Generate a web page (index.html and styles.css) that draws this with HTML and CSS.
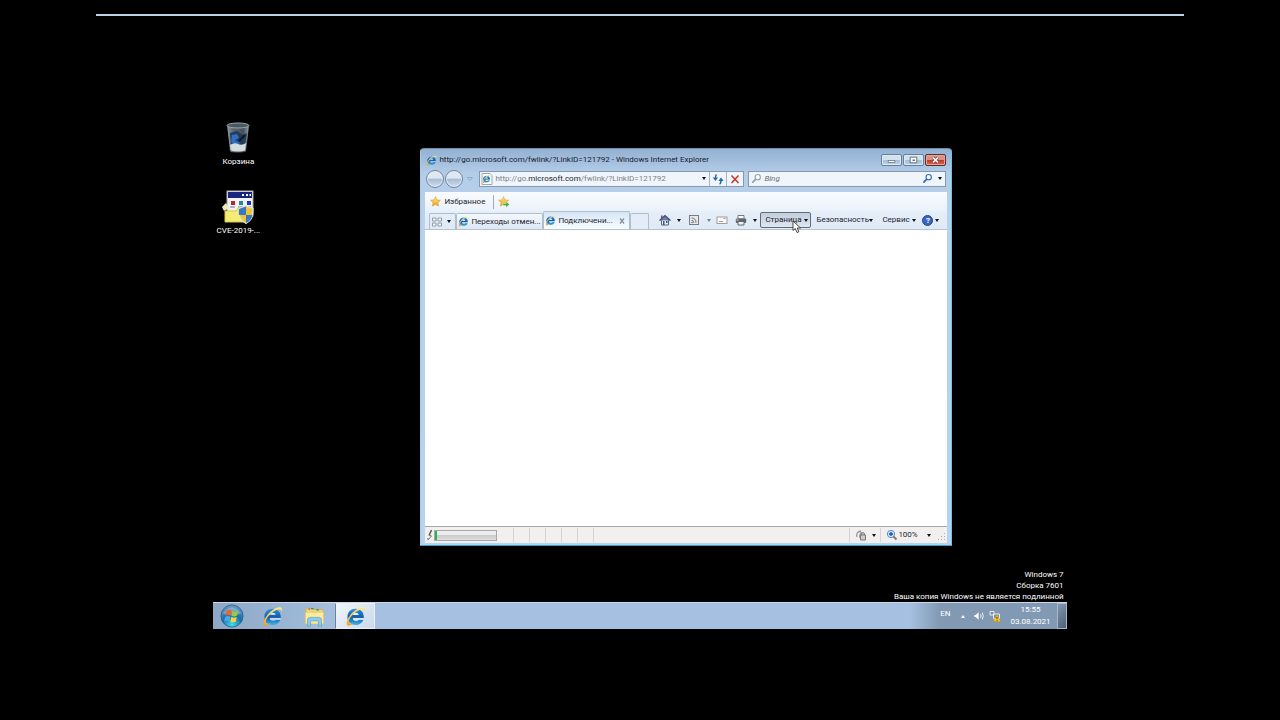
FILE: index.html
```html
<!DOCTYPE html>
<html lang="ru">
<head>
<meta charset="utf-8">
<title>Windows 7</title>
<link rel="stylesheet" href="styles.css">
</head>
<body>
<svg class="defs" width="0" height="0" aria-hidden="true">
  <defs>
    <linearGradient id="ieBlue" x1="0" y1="0" x2="0" y2="1">
      <stop offset="0" stop-color="#2f93dd"/><stop offset=".5" stop-color="#145cae"/><stop offset="1" stop-color="#38b2e6"/>
    </linearGradient>
    <linearGradient id="gold" x1="0" y1="0" x2="0" y2="1">
      <stop offset="0" stop-color="#ffe98c"/><stop offset="1" stop-color="#f0a21c"/>
    </linearGradient>
    <radialGradient id="orb" cx=".5" cy=".9" r=".9">
      <stop offset="0" stop-color="#3fe0f4"/><stop offset=".5" stop-color="#1a6ea8"/><stop offset="1" stop-color="#6f9cc4"/>
    </radialGradient>
    <linearGradient id="bin" x1="0" y1="0" x2="1" y2="0">
      <stop offset="0" stop-color="#8b9aa3"/><stop offset=".3" stop-color="#56646e"/><stop offset=".75" stop-color="#46535d"/><stop offset="1" stop-color="#94a2aa"/>
    </linearGradient>
    <symbol id="ie" viewBox="0 0 24 24">
      <path d="M21.500 14H9c.2 2 1.500 3 3.600 3 1.400 0 2.500-.500 3.100-1.400h5.300c-1.200 3.700-4.400 6-8.700 6-5.700 0-9.500-3.600-9.500-9.100S6.600 3.200 12.300 3.200c5.800 0 9.500 4 9.200 10.800zM9.100 10.400h6.500c-.2-1.700-1.400-2.600-3.100-2.600s-3 .9-3.400 2.600z" fill="url(#ieBlue)"/>
      <path d="M9.500 9.800h5.800c-.4-1.200-1.400-1.700-2.800-1.700s-2.600.6-3 1.700zM9 14h12.400v1.400H9.500z" fill="#e4f2fb"/>
      <path d="M3.300 22.500C-.3 20.800 3.500 11.500 10 6.200 15.500 1.700 21.600-.1 22.700 3c.4 1.100.1 2.500-.6 3.900.1-2-.8-3.100-2.900-2.900C15.800 4.300 11 7.200 7.500 11.500c-3.400 4.200-4.500 8.100-1.500 8.700 1 .2 2.300-.1 3.700-.7-2.500 2.300-4.900 3.600-6.400 3z" fill="url(#gold)"/>
    </symbol>
    <symbol id="star" viewBox="0 0 24 24">
      <path d="M12 1.500l3.200 7 7.500.8-5.600 5.200 1.600 7.500L12 18.200 5.300 22l1.600-7.500L1.300 9.300l7.500-.8z" fill="url(#gold)" stroke="#d99314" stroke-width="1.200"/>
    </symbol>
    <symbol id="glass" viewBox="0 0 12 12">
      <circle cx="7.300" cy="4.500" r="2.900" fill="#fff" fill-opacity=".7" stroke="currentColor" stroke-width="1.200"/>
      <path d="M5 7L2 10" stroke="currentColor" stroke-width="1.800" stroke-linecap="round"/>
    </symbol>
  </defs>
</svg>

<div class="session-line"></div>
<main class="desktop">
  <div class="shortcuts">
    <a class="shortcut" href="#">
      <svg viewBox="0 0 34 34">
        <path d="M6 4h22l-3 26c-.3 2-15.700 2-16 0z" fill="url(#bin)"/>
        <path d="M9 12l7-2 6 4 4-2-2 12H10z" fill="#243c58"/>
        <path d="M11 14l5-1 2 4-4 2 5 3-3 3-6-4z" fill="#2f6fca"/>
        <path d="M18 20l6-6" stroke="#0c1826" stroke-width="2"/>
        <path d="M9 24q4-3 8-1t8-1l-.8 7c-2 2-12 2-14.400 0z" fill="#d5dde0"/>
        <ellipse cx="17" cy="4.500" rx="11" ry="2.500" fill="#4a5860" stroke="#9aa6ab"/>
      </svg>
      <span>Корзина</span>
    </a>
    <a class="shortcut" href="#">
      <svg viewBox="0 0 34 34">
        <rect x="6" y="1" width="26" height="25" fill="#f2f2f4" stroke="#aaa"/>
        <rect x="7" y="2" width="24" height="6" fill="#19247e"/>
        <path d="M21 4h2v2h-2zM25 4h2v2h-2zM28.500 4h1.500v2h-1.500z" fill="#fff"/>
        <path d="M10 11h4v4h-4z" fill="#b32636"/><path d="M18 11h4v4h-4z" fill="#1c8d9b"/><path d="M26 11h4v4h-4z" fill="#2336ad"/>
        <path d="M9 17h5M17 17h5M25 17h5" stroke="#777"/>
        <path d="M4 21h11l2-3h6v14H4z" fill="#f4ed72" stroke="#d4c746"/>
        <path d="M1 17l4-4 3 5-5 3z" fill="#ecebb5"/>
        <path d="M25 16l7 2.500c0 8-1 12-7 15-6-3-7-7-7-15z" fill="#efc735" stroke="#dde5ec" stroke-width="1.200"/>
        <path d="M25 16.500V25h-7q-.3-3 0-6zM25 25h6.500q-1.500 6-6.500 8z" fill="#3b78c4"/>
      </svg>
      <span>CVE-2019-...</span>
    </a>
  </div>

  <section class="window">
    <header class="titlebar">
      <svg class="i11"><use href="#ie"/></svg>
      <h1>http://go.microsoft.com/fwlink/?LinkID=121792 - Windows Internet Explorer</h1>
      <button class="caption" aria-label="Свернуть"><svg viewBox="0 0 20 10"><rect x="6.500" y="5.500" width="7" height="2" fill="#fff" stroke="#667585" stroke-width=".8"/></svg></button>
      <button class="caption" aria-label="Развернуть"><svg viewBox="0 0 20 10"><path d="M6.500 2h7v6h-7z" fill="#fff" stroke="#5b6877"/><path d="M9 4.500h2.500v1.500H9z" fill="#53606e"/></svg></button>
      <button class="caption close" aria-label="Закрыть"><svg viewBox="0 0 20 10"><path d="M7.500 2.500l5 5m0-5l-5 5" stroke="#69302c" stroke-width="3"/><path d="M7.500 2.500l5 5m0-5l-5 5" stroke="#fff" stroke-width="1.700"/></svg></button>
    </header>

    <div class="address-row">
      <button class="nav" aria-label="Назад"></button>
      <button class="nav" aria-label="Вперед"></button>
      <svg class="recent" viewBox="0 0 8 6"><path d="M1.500 1.500h5L4 4.500z" fill="#c9dcee" stroke="#7fa6cd" stroke-width=".9"/></svg>
      <div class="address">
        <svg class="page-icon" viewBox="0 0 12 12"><path d="M1 .5h8l2 2v9H1z" fill="#fff" stroke="#9fa6ac"/><use href="#ie" x="1" y="1.500" width="9" height="9"/></svg>
        <div class="url" role="textbox" aria-label="Адрес" tabindex="0">http://go.<b>microsoft.com</b>/fwlink/?LinkID=121792</div>
        <button class="drop" aria-label="Показать адреса"></button>
        <button class="cell" aria-label="Обновить"><svg viewBox="0 0 12 12"><path d="M4.500 1.500Q3.500 2 3.500 5" fill="none" stroke="#2368ad" stroke-width="1.500"/><path d="M.8 4.500H6L3.400 8z" fill="#2368ad"/><path d="M7.500 11Q9 10.500 9 7.500" fill="none" stroke="#2368ad" stroke-width="1.500"/><path d="M6.400 8h5.200L9 4.500z" fill="#2368ad"/></svg></button>
        <button class="cell" aria-label="Остановить"><svg viewBox="0 0 12 12"><path d="M2.500 2.500l7 7.500M9.500 2.500l-7 7.500" stroke="#c73524" stroke-width="1.500"/></svg></button>
      </div>
      <div class="search">
        <svg class="i11 pale"><use href="#glass"/></svg>
        <input type="text" placeholder="Bing" aria-label="Поиск">
        <button class="go" aria-label="Найти"><svg class="i11"><use href="#glass"/></svg></button>
        <button class="drop" aria-label="Параметры поиска"></button>
      </div>
    </div>

    <div class="favorites">
      <button class="fav"><svg class="i11"><use href="#star"/></svg>Избранное</button>
      <button class="fav add" aria-label="Добавить"><svg class="i12" viewBox="0 0 12 12"><use href="#star" width="11" height="11"/><path d="M5 7.500h3v-2L11.500 8.500 8 11.500v-2H5z" fill="#3fae3c" stroke="#e7f5dc" stroke-width=".5"/></svg></button>
    </div>

    <div class="toolbar">
      <div class="tabs">
        <button class="quick" aria-label="Быстрые вкладки"><svg viewBox="0 0 12 12"><path d="M1.500 2h3.500v3H1.500zM7 2h3.500v3H7zM1.500 7h3.500v3H1.500zM7 7h3.500v3H7z" fill="#fff" stroke="#8d9aa8"/></svg><i class="arrow"></i></button>
        <button class="tab"><svg class="i11"><use href="#ie"/></svg><span>Переходы отмен...</span></button>
        <button class="tab active"><svg class="i11"><use href="#ie"/></svg><span>Подключени...</span><svg class="x" viewBox="0 0 8 8"><path d="M2 1.500l4 5M6 1.500l-4 5" stroke="#8793a1" stroke-width="1.300"/></svg></button>
        <button class="newtab" aria-label="Новая вкладка"></button>
      </div>
      <div class="commands">
        <button class="cmd home" aria-label="Домой"><svg viewBox="0 0 12 12"><path d="M2.500 5.500h7v5.500h-7z" fill="#e8eef5" stroke="#55657c"/><path d="M.5 6.500L6 1.500l5.500 5" fill="#6b7fa8" stroke="#3d4f78" stroke-width="1.200"/><path d="M2 1.500h1.500V4H2z" fill="#8b4b42"/><path d="M4 7h1.500v4H4zM7 7h1.500v2H7z" fill="#3d567e"/></svg><i class="arrow"></i></button>
        <button class="cmd rss" aria-label="Веб-каналы"><svg viewBox="0 0 12 12"><rect x="1.500" y="1.500" width="9" height="9" fill="#e6e8ea" stroke="#777d83"/><path d="M3.500 4q4.500 0 4.500 4.800M3.500 6.300q2.300 0 2.300 2.500" fill="none" stroke="#70767c"/><circle cx="4" cy="8.500" r=".8" fill="#70767c"/></svg><i class="arrow dim"></i></button>
        <button class="cmd mail" aria-label="Почта"><svg viewBox="0 0 12 12"><rect x="1" y="3" width="10" height="6.500" fill="#fcfcfc" stroke="#999fa6"/><path d="M7.500 4.500h2M3 7.500h4" stroke="#bd8f82"/></svg></button>
        <button class="cmd print" aria-label="Печать"><svg viewBox="0 0 12 12"><path d="M3 1.500h6V5H3z" fill="#fff" stroke="#777"/><rect x=".8" y="4.500" width="10.400" height="4.500" rx="1" fill="#60666e"/><path d="M3 7.500h6V11H3z" fill="#eef0f3" stroke="#666"/><path d="M1.500 6h2" stroke="#cdd"/></svg><i class="arrow"></i></button>
        <button class="cmd pressed">Страница<i class="arrow"></i></button>
        <button class="cmd safety">Безопасность<i class="arrow"></i></button>
        <button class="cmd service">Сервис<i class="arrow"></i></button>
        <button class="cmd help" aria-label="Справка"><span class="ball">?</span><i class="arrow"></i></button>
      </div>
    </div>

    <div class="page"></div>

    <footer class="status">
      <svg class="pen" viewBox="0 0 8 12"><path d="M5.500 1L3 6.500" stroke="#555" stroke-width="1.500"/><path d="M3 6l2.500 1L2 11M1 10h2" stroke="#777" fill="none"/></svg>
      <div class="meter" role="progressbar" aria-label="Загрузка"></div>
      <div class="cells"><i></i><i></i><i></i><i></i><i></i><i></i></div>
      <button class="zone" aria-label="Фильтрация"><svg viewBox="0 0 12 12"><path d="M2 8q-1.500-5 4-6M5 9q-1-4 2-6" fill="none" stroke="#999" stroke-width="1.300"/><path d="M6.500 6V4.500q1.500-2 3 0V6M5.500 6h5v5h-5z" fill="#ccc" stroke="#777"/></svg><i class="arrow"></i></button>
      <button class="zoom"><svg viewBox="0 0 12 12"><path d="M7 7l3.500 3.500" stroke="#8b7562" stroke-width="2"/><circle cx="5" cy="5" r="3.600" fill="#d6eaff" stroke="#5687bd"/><path d="M5 3v4M3 5h4" stroke="#154fae" stroke-width="1.400"/></svg>100%<i class="arrow"></i></button>
      <svg class="grip" viewBox="0 0 8 10"><path d="M6 3h1v1H6zM6 6h1v1H6zM3 6h1v1H3zM6 9h1v1H6zM3 9h1v1H3zM0 9h1v1H0z" fill="#aeb3b8"/></svg>
    </footer>
  </section>

  <svg class="cursor" viewBox="0 0 10 14"><path d="M1 1v9.500l2.300-2L5 12.500l1.900-.8L5.200 8H8.500z" fill="#fff" stroke="#333" stroke-width=".9"/></svg>

  <div class="bottom">
    <div class="watermark">
      <p>Windows 7</p>
      <p>Сборка 7601</p>
      <p>Ваша копия Windows не является подлинной</p>
    </div>
    <nav class="taskbar">
      <button class="task start" aria-label="Пуск"><svg viewBox="0 0 26 26"><circle cx="13" cy="13" r="12" fill="url(#orb)" stroke="#255a87" stroke-width=".8"/><path d="M3 10Q13-3 23 10q-10 5-20 0z" fill="#fff" opacity=".28"/><path d="M7 7.500q3-2 5.500-.5l-1 5.500q-3-1.500-5.700.3z" fill="#f0632c"/><path d="M13.500 7.500q3 1.500 6-.3l-1.200 5.600q-3 1.600-5.800 0z" fill="#9ccb3c"/><path d="M5.500 14q3-1.700 5.700-.2l-1 5q-3-1.400-5.700.2z" fill="#4aa7ee"/><path d="M12.300 14q2.800 1.500 5.900.1l-1.200 5q-3 1.500-5.700 0z" fill="#fbd13b"/></svg></button>
      <button class="task" aria-label="Internet Explorer"><svg><use href="#ie"/></svg></button>
      <button class="task" aria-label="Проводник"><svg viewBox="0 0 24 24"><path d="M2 4.500l1-2h6l1 1.500h11l1 2v14H2z" fill="#f0d878" stroke="#c8a94d" stroke-width=".8"/><path d="M8 3h3M14 4.500h3" stroke="#3a8d55" stroke-width="1.500"/><path d="M5 3.500h2" stroke="#c95232" stroke-width="1.500"/><path d="M1.500 7h21v13.500h-21z" fill="#fbeaa0" stroke="#dbc06a" stroke-width=".8"/><path d="M4 23v-7q0-3 3-3h10q3 0 3 3v7h-3.500v-5q0-1-1-1h-7q-1 0-1 1v5z" fill="#8ccbeb" stroke="#4f9cc6" stroke-width=".7"/></svg></button>
      <button class="task current" aria-label="Internet Explorer, открыто"><svg><use href="#ie"/></svg></button>
      <div class="tray">
        <span class="lang">EN</span>
        <i class="up"></i>
        <svg class="i12" viewBox="0 0 12 12"><path d="M1 4.500h2L6 1.500v9L3 7.500H1z" fill="#fff" stroke="#69798a" stroke-width=".5"/><path d="M7.500 4q1.200 2 0 4M9.200 2.500q2.300 3.500 0 7" fill="none" stroke="#f3f6fa" stroke-width=".9"/></svg>
        <svg class="i12 net" viewBox="0 0 12 12"><path d="M1 1.500h4V5H1zM4.500 4h6v4.500h-6z" fill="#8194a7" stroke="#f0f3f6" stroke-width=".9"/><path d="M8 5l3.700 6.500H4.300z" fill="#f9cc27" stroke="#c18c08" stroke-width=".4"/><path d="M8 7v2.200M8 10v.8" stroke="#403000" stroke-width=".9"/></svg>
        <div class="clock"><time>15:55</time><time>03.08.2021</time></div>
        <button class="peek" aria-label="Свернуть все окна"></button>
      </div>
    </nav>
  </div>
</main>
</body>
</html>
```
FILE: styles.css
```css
* { box-sizing: border-box; }
body {
  margin: 0;
  min-height: 100vh;
  display: flex;
  flex-direction: column;
  align-items: center;
  background: #000;
  color: #1c2430;
  font: 8px/12px Roboto, "Noto Sans", sans-serif;
}
button {
  margin: 0;
  padding: 0;
  border: 0;
  background: none;
  color: inherit;
  font: inherit;
  display: flex;
  align-items: center;
  white-space: nowrap;
}
svg { display: block; flex: none; }
.defs { position: absolute; }
.i11 { width: 11px; height: 11px; }
.i12 { width: 12px; height: 12px; }
.arrow, .drop::before {
  content: "";
  flex: none;
  border: 2px solid transparent;
  border-top: 3px solid #111;
  border-bottom: 0;
}
.arrow.dim { border-top-color: #75818d; }

.session-line {
  width: 85%;
  height: 2px;
  margin-top: 14px;
  background: #b9d3e2;
}
.desktop {
  position: relative;
  flex: 1;
  width: 66.66%;
  margin-bottom: 91px;
  padding-top: 104px;
  display: flex;
  flex-direction: column;
}
.shortcuts {
  width: 50px;
  display: flex;
  flex-direction: column;
  gap: 21px;
}
.shortcut {
  display: flex;
  flex-direction: column;
  align-items: center;
  color: #fff;
  text-decoration: none;
  white-space: nowrap;
}
.shortcut svg { width: 34px; height: 36px; }

.window {
  position: absolute;
  left: 207px;
  top: 132px;
  width: 532px;
  height: 398px;
  padding: 0 4px 2px;
  display: flex;
  flex-direction: column;
  border: 1px solid #6f8ba6;
  border-color: #6f8ba6 #73c4e2 #3d9dc4 #a5cbe6;
  border-radius: 4px 4px 0 0;
  background: linear-gradient(#93b1d2, #b3cce8 24px, #b9d1ea 60px, #b7d3ed);
}
.titlebar {
  height: 21px;
  display: flex;
  align-items: center;
  gap: 1px;
  padding: 1px 1px 0;
}
.titlebar h1 {
  flex: 1;
  margin: 0 0 0 1px;
  font: inherit;
  line-height: 14px;
  color: #17202c;
}
.caption {
  width: 21px;
  height: 12px;
  border: 1px solid #66809b;
  border-radius: 2px;
  background: linear-gradient(#d3e0ee 45%, #a5bdd7 50%, #bed3e9);
  box-shadow: inset 0 0 0 1px #dce8f4;
}
.caption svg { width: 19px; height: 10px; }
.caption.close {
  border-color: #632a2b;
  background: linear-gradient(#dd9082 45%, #bd3b25 50%, #d46a4b);
  box-shadow: inset 0 0 0 1px #e4a69c;
}
.address-row {
  height: 17px;
  margin-bottom: 5px;
  display: flex;
  align-items: center;
  padding-right: 1px;
}
.nav {
  width: 18px;
  height: 18px;
  margin-left: 1px;
  border: 1px solid #71869e;
  border-radius: 50%;
  background: linear-gradient(#dfe8f2 45%, #a6bbd3 50%, #cfdeed);
  box-shadow: inset 0 0 0 1px #e5edf5;
}
.recent { width: 8px; height: 6px; margin: 0 5px 0 3px; }
.address, .search {
  height: 16px;
  display: flex;
  align-items: center;
  border: 1px solid #8299b1;
  background: #f0f5fb;
}
.address { flex: 1; }
.page-icon { width: 12px; height: 12px; margin: 0 2px 0 1px; }
.url { flex: 1; color: #7c8288; white-space: nowrap; }
.url b { color: #20262c; font-weight: normal; }
.drop { width: 10px; height: 14px; justify-content: center; }
.cell {
  width: 17px;
  height: 14px;
  justify-content: center;
  border-left: 1px solid #a5b5c6;
}
.cell svg { width: 12px; height: 12px; }
.search { width: 198px; margin-left: 4px; padding-left: 2px; }
.search input {
  flex: 1;
  min-width: 0;
  padding: 0 2px;
  border: 0;
  background: none;
  font: inherit;
  font-style: italic;
}
.search input::placeholder { color: #666d75; opacity: 1; }
.pale { color: #8fa0b1; }
.go { color: #2c6cab; margin-right: 2px; }

.favorites {
  height: 19px;
  display: flex;
  align-items: center;
  padding-left: 5px;
  background: linear-gradient(#fafcfe, #e9f1fa);
}
.fav { gap: 3px; height: 14px; }
.fav.add { margin-left: 8px; padding-left: 4px; border-left: 1px solid #9eabb9; }
.toolbar {
  height: 19px;
  display: flex;
  justify-content: space-between;
  background: linear-gradient(#e5eef9, #dfeaf6);
  border-bottom: 1px solid #b4c3d3;
}
.tabs { display: flex; align-items: flex-end; padding-left: 4px; }
.quick, .tab, .newtab {
  height: 16px;
  border: 1px solid #b0bfd0;
  border-bottom: 0;
  border-radius: 2px 2px 0 0;
}
.quick { width: 27px; gap: 4px; padding-left: 1px; }
.quick svg { width: 12px; height: 12px; }
.tab { width: 87px; gap: 2px; padding: 0 3px 0 1px; background: linear-gradient(#f4f8fc, #dce7f3); }
.tab span { flex: 1; text-align: left; }
.tab.active { height: 18px; background: linear-gradient(#d5e5f6, #fbfdff); }
.tab .x { width: 8px; height: 8px; }
.newtab { width: 19px; background: #e4edf7; }
.commands { display: flex; align-items: center; }
.cmd { height: 16px; justify-content: space-between; }
.cmd svg { width: 12px; height: 12px; }
.home { width: 22px; margin-right: 7px; }
.rss { width: 23px; margin-right: 5px; }
.mail { width: 12px; margin-right: 7px; }
.print { width: 22px; margin-right: 3px; }
.pressed {
  width: 51px;
  padding: 0 2px 0 4px;
  border: 1px solid #5f6e7f;
  border-radius: 2px;
  background: linear-gradient(#c2cedb, #dfe7ef);
}
.safety { width: 57px; margin-left: 5px; }
.service { width: 34px; margin-left: 9px; }
.help { width: 17px; margin: 0 8px 0 6px; }
.ball {
  width: 11px;
  height: 11px;
  border: 1px solid #23449b;
  border-radius: 50%;
  background: #3d65bb;
  color: #fff;
  font-weight: bold;
  line-height: 9px;
}
.page { flex: 1; background: #fff; }
.status {
  height: 17px;
  display: flex;
  align-items: center;
  border-top: 1px solid #a2a9af;
  background: #f1f0ef;
}
.pen { width: 8px; height: 12px; margin-left: 1px; }
.meter {
  width: 63px;
  height: 11px;
  border: 1px solid #a8a8a8;
  background: linear-gradient(90deg, #29b34a 2px, transparent 2px), linear-gradient(#ececec 40%, #cbcbcb 50%, #dedede);
}
.cells { flex: 1; display: flex; height: 14px; padding-left: 1px; }
.cells i { width: 16px; border-right: 1px solid #d6d5d4; }
.zone { width: 31px; height: 14px; gap: 5px; padding-left: 5px; border-left: 1px solid #d6d5d4; }
.zone svg, .zoom svg { width: 12px; height: 12px; }
.zoom { width: 58px; height: 14px; padding: 0 7px 0 5px; border-left: 1px solid #d6d5d4; }
.zoom .arrow { margin-left: auto; }
.grip { width: 8px; height: 10px; margin-right: 1px; }
.cursor { position: absolute; left: 579px; top: 204px; width: 10px; height: 14px; }

.bottom { margin-top: auto; }
.watermark { padding-right: 3px; color: #fff; text-align: right; line-height: 11px; }
.watermark p { margin: 0; }
.taskbar {
  height: 27px;
  display: flex;
  border-top: 1px solid #c7d9ec;
  background: linear-gradient(90deg, #8da7c4, #a5c0e0 130px);
}
.task { width: 42px; justify-content: center; }
.task svg { width: 21px; height: 21px; }
.start { width: 38px; }
.start svg { width: 24px; height: 24px; }
.current {
  width: 40px;
  border: 1px solid #e9f1f8;
  border-left-color: #6e8299;
  border-radius: 1px;
  background: linear-gradient(135deg, #f1f5fa, #cad9ea);
}
.tray {
  margin-left: auto;
  padding-left: 30px;
  display: flex;
  align-items: center;
  color: #fff;
  background: linear-gradient(90deg, transparent, #8199b3 30px);
}
.lang { margin-bottom: 4px; }
.up { margin: 0 8px 0 11px; border: 2px solid transparent; border-bottom: 3px solid #fff; border-top: 0; }
.net { margin-left: 4px; }
.clock { margin: 0 6px 0 9px; display: flex; flex-direction: column; text-align: center; }
.clock time { line-height: 12px; }
.peek {
  width: 10px;
  height: 100%;
  border: 1px solid #a5b8cc;
  background: linear-gradient(135deg, #8497ac, #4c6078);
}
```
